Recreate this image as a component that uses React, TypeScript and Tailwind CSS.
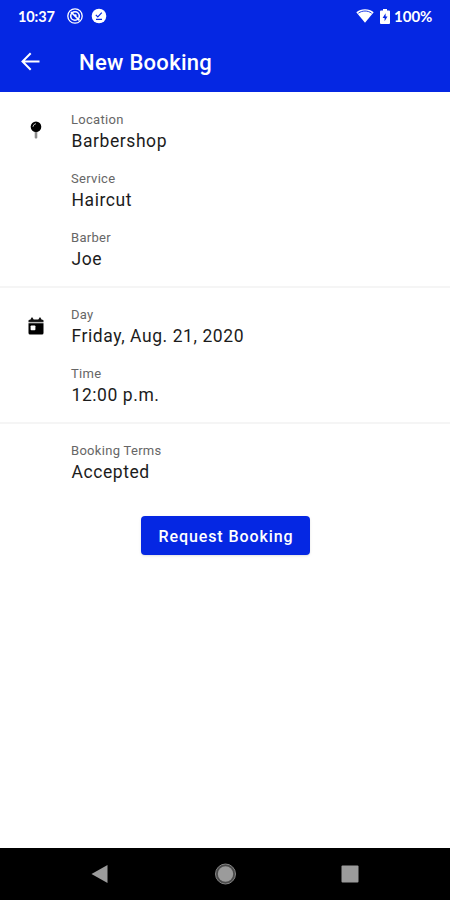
import type { ReactNode } from "react";

function StatusBar() {
  return (
    <div className="flex h-8 items-center justify-between pl-[18px] pr-[17px] font-['Lato',sans-serif] text-[15px] font-bold leading-none">
      <div className="flex items-center">
        <span className="w-12 pt-[2px] text-[14.5px] tracking-[-0.1px]">10:37</span>
        <svg width="16" height="16" viewBox="0 0 16 16" fill="none" stroke="currentColor" className="ml-px">
          <circle cx="8" cy="8" r="7.2" strokeWidth="1.3" />
          <circle cx="8" cy="8" r="4.3" strokeWidth="1.6" />
          <path d="M4 4l8.5 8.5" strokeWidth="1.7" />
          <circle cx="8.6" cy="7.4" r="1.1" fill="currentColor" stroke="none" />
        </svg>
        <svg width="16" height="16" viewBox="0 0 16 16" className="ml-2">
          <circle cx="8" cy="8" r="7.3" fill="currentColor" />
          <path d="M4.8 6.8l2 2 4-4.2M5 11.3h6" fill="none" stroke="#0527e3" strokeWidth="1.2" />
        </svg>
      </div>
      <div className="flex items-center">
        <svg width="18" height="14" viewBox="0 0 18 14" fill="currentColor">
          <path d="M9 0.3C5.5 0.3 2.5 1.5 0.3 3.3L9 13.8l8.7-10.5C15.5 1.5 12.5 0.3 9 0.3z" />
          <path d="M2.4 4.2C6.2 1.3 11.8 1.3 15.6 4.2" fill="none" stroke="#0527e3" strokeWidth="0.9" />
        </svg>
        <svg width="10" height="15" viewBox="0 0 10 15" fill="currentColor" className="ml-1.5">
          <path d="M3 0h4v1.6h2q1 0 1 1V14q0 1-1 1H1q-1 0-1-1V2.6q0-1 1-1h2z" />
          <path d="M5.6 4.2L2.6 9h2v3.2L7.5 7.6H5.6z" fill="#0527e3" />
        </svg>
        <span className="ml-1 w-[39px] pt-px">100%</span>
      </div>
    </div>
  );
}

function Header() {
  return (
    <header className="h-[92px] shrink-0 bg-[#0527e3] text-white">
      <StatusBar />
      <div className="flex h-[60px] items-center pl-[21px]">
        <svg width="19" height="19" viewBox="0 0 19 19" fill="none" stroke="currentColor" strokeWidth="2" className="-mt-px">
          <path d="M18.5 9.5H2M9.7 1.3L1.5 9.5l8.2 8.2" />
        </svg>
        <h1 className="ml-[39px] mt-[2px] text-[22px] font-medium leading-none tracking-[0.3px]">New Booking</h1>
      </div>
    </header>
  );
}

function PinIcon() {
  return (
    <svg width="12" height="18" viewBox="0 0 12 18" className="-mt-px">
      <rect x="4.7" y="9" width="2.6" height="8.5" rx="1" fill="#8c8c8c" />
      <circle cx="6" cy="5.7" r="5.3" fill="#000" />
      <path d="M3 5.4Q3.3 3.1 5.6 2.7" fill="none" stroke="#bbb" strokeWidth="1" strokeLinecap="round" />
    </svg>
  );
}

function CalendarIcon() {
  return (
    <svg width="16" height="18" viewBox="0 0 16 18">
      <path d="M0.5 4.9V3.7q0-1 1-1H2.2L4 0 5.7 2.5h4.6L12 0l1.8 2.7h.7q1 0 1 1v1.2z" fill="#111" />
      <path d="M0.5 4.9h15v1.4H.5z" fill="#bbb" />
      <path d="M0.5 6.3h15V16q0 1.5-1.5 1.5H2Q0.5 17.5 0.5 16z" fill="#000" />
      <rect x="2.6" y="8.5" width="4.8" height="4.8" rx="0.8" fill="#fff" />
    </svg>
  );
}

function Field({ label, value }: { label: string; value: string }) {
  return (
    <div className="h-[59px]">
      <div className="text-[13px] leading-[18px] tracking-[0.3px] text-[#666]">{label}</div>
      <div className="mt-px pl-[0.5px] text-[17.5px] leading-[22px] tracking-[0.57px] text-[#1c1c1c]">{value}</div>
    </div>
  );
}

function Section({ icon, children }: { icon?: ReactNode; children: ReactNode }) {
  return (
    <section className="flex pt-[18px]">
      <div className="flex w-[71px] shrink-0 justify-center pt-[11px]">{icon}</div>
      <div>{children}</div>
    </section>
  );
}

export default function App() {
  return (
    <div className="flex h-[900px] w-[450px] flex-col bg-white font-['Roboto',sans-serif]">
      <Header />
      <main className="flex-1">
        <div className="h-[196px] border-b-2 border-[#f5f5f5] pt-px">
          <Section icon={<PinIcon />}>
            <Field label="Location" value="Barbershop" />
            <Field label="Service" value="Haircut" />
            <Field label="Barber" value="Joe" />
          </Section>
        </div>
        <div className="h-[136px] border-b-2 border-[#f5f5f5]">
          <Section icon={<CalendarIcon />}>
            <Field label="Day" value="Friday, Aug. 21, 2020" />
            <Field label="Time" value="12:00 p.m." />
          </Section>
        </div>
        <Section>
          <Field label="Booking Terms" value="Accepted" />
        </Section>
        <button className="mx-auto mt-[15px] block h-[39px] w-[169px] rounded bg-[#0527e3] pl-[2px] pt-[2px] text-base font-medium tracking-[0.9px] text-white shadow-sm">
          Request Booking
        </button>
      </main>
      <nav className="h-[52px] shrink-0 bg-black">
        <svg width="450" height="52" viewBox="0 0 450 52" fill="#9b9b9b">
          <path d="M91.5 26L107.5 17v18z" />
          <circle cx="225.5" cy="26" r="10" fill="#4a4a4a" stroke="#858585" strokeWidth="1" />
          <circle cx="225.5" cy="26" r="7.7" />
          <rect x="341.5" y="17.5" width="17" height="17" rx="1" />
        </svg>
      </nav>
    </div>
  );
}
